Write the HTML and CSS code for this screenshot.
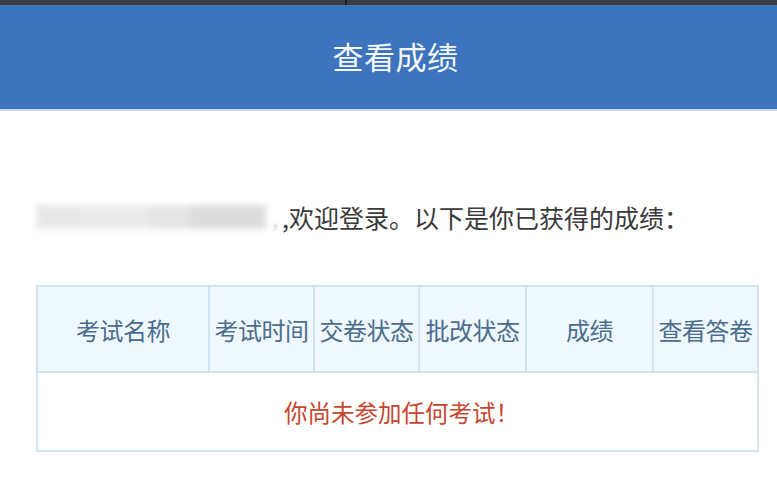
FILE: index.html
```html
<!DOCTYPE html>
<html lang="zh-CN">
<head>
<meta charset="utf-8">
<title>查看成绩</title>
<link rel="stylesheet" href="styles.css">
</head>
<body>
<div class="topbar"><span class="topbar-divider"></span></div>
<header class="header">
  <h1 class="title">查看成绩</h1>
</header>
<main class="content">
  <p class="greeting">
    <span class="name-blur" aria-hidden="true">
      <span class="blob b1"></span><span class="blob b2"></span><span class="blob b3"></span><span class="blob b4"></span>
    </span><span class="ghost-comma">,</span><span class="greet-text">,欢迎登录。以下是你已获得的成绩：</span>
  </p>
  <table class="score-table">
    <colgroup>
      <col class="c-name"><col class="c-time"><col class="c-submit"><col class="c-mark"><col class="c-score"><col class="c-view">
    </colgroup>
    <thead>
      <tr>
        <th>考试名称</th>
        <th>考试时间</th>
        <th>交卷状态</th>
        <th>批改状态</th>
        <th>成绩</th>
        <th>查看答卷</th>
      </tr>
    </thead>
    <tbody>
      <tr>
        <td class="empty" colspan="6">你尚未参加任何考试！</td>
      </tr>
    </tbody>
  </table>
</main>
</body>
</html>
```

FILE: styles.css
```css
* { box-sizing: border-box; }
html, body {
  margin: 0;
  padding: 0;
  background: #ffffff;
  font-family: "Noto Sans CJK SC", "Noto Sans", "Liberation Sans", sans-serif;
}
.topbar {
  height: 5px;
  background: #3b3e44;
  position: relative;
}
.topbar-divider {
  position: absolute;
  left: 345px;
  top: 0;
  width: 2px;
  height: 5px;
  background: #1e1f22;
}
.header {
  height: 106px;
  background: #3d74bd;
  border-bottom: 2px solid #cdd9ea;
  display: flex;
  align-items: center;
  justify-content: center;
}
.title {
  margin: 0;
  color: #f4f7fb;
  font-size: 31px;
  font-weight: 400;
  letter-spacing: 0.5px;
  padding: 0 0 4px 14px;
}
.content {
  padding: 0 20px 0 36px;
}
.greeting {
  margin: 86px 0 48px 0;
  height: 40px;
  display: flex;
  align-items: center;
  font-size: 25px;
  color: #3a3a3a;
}
.name-blur {
  display: flex;
  align-items: center;
  width: 236px;
  height: 36px;
  filter: blur(3px);
  opacity: 0.9;
}
.blob {
  height: 24px;
  background: #dcdcdc;
}
.b1 { width: 44px; background: #e6e6e6; }
.b2 { width: 70px; background: #e9e9e9; }
.b3 { width: 40px; background: #e2e2e2; }
.b4 { width: 76px; background: #d9d9d9; }
.ghost-comma {
  color: #c9c9c9;
  filter: blur(1px);
  width: 10px;
  font-size: 22px;
}
.greet-text { color: #3a3a3a; }
.score-table {
  width: 721px;
  border-collapse: collapse;
  table-layout: fixed;
  border: 2px solid #d3e7f1;
}
.c-name { width: 172px; }
.c-time { width: 105px; }
.c-submit { width: 105px; }
.c-mark { width: 107px; }
.c-score { width: 127px; }
.c-view { width: 105px; }
.score-table th {
  height: 86px;
  background: #eef8fd;
  border: 2px solid #cfe4ef;
  color: #4b6c8c;
  font-size: 24px;
  font-weight: 400;
  padding: 0;
  white-space: nowrap;
  text-align: center;
  letter-spacing: -0.5px;
}
.score-table td.empty {
  height: 79px;
  text-align: center;
  color: #c4472e;
  font-size: 23.5px;
  padding: 0 0 0 8px;
  border: 2px solid #d3e7f1;
}
```
